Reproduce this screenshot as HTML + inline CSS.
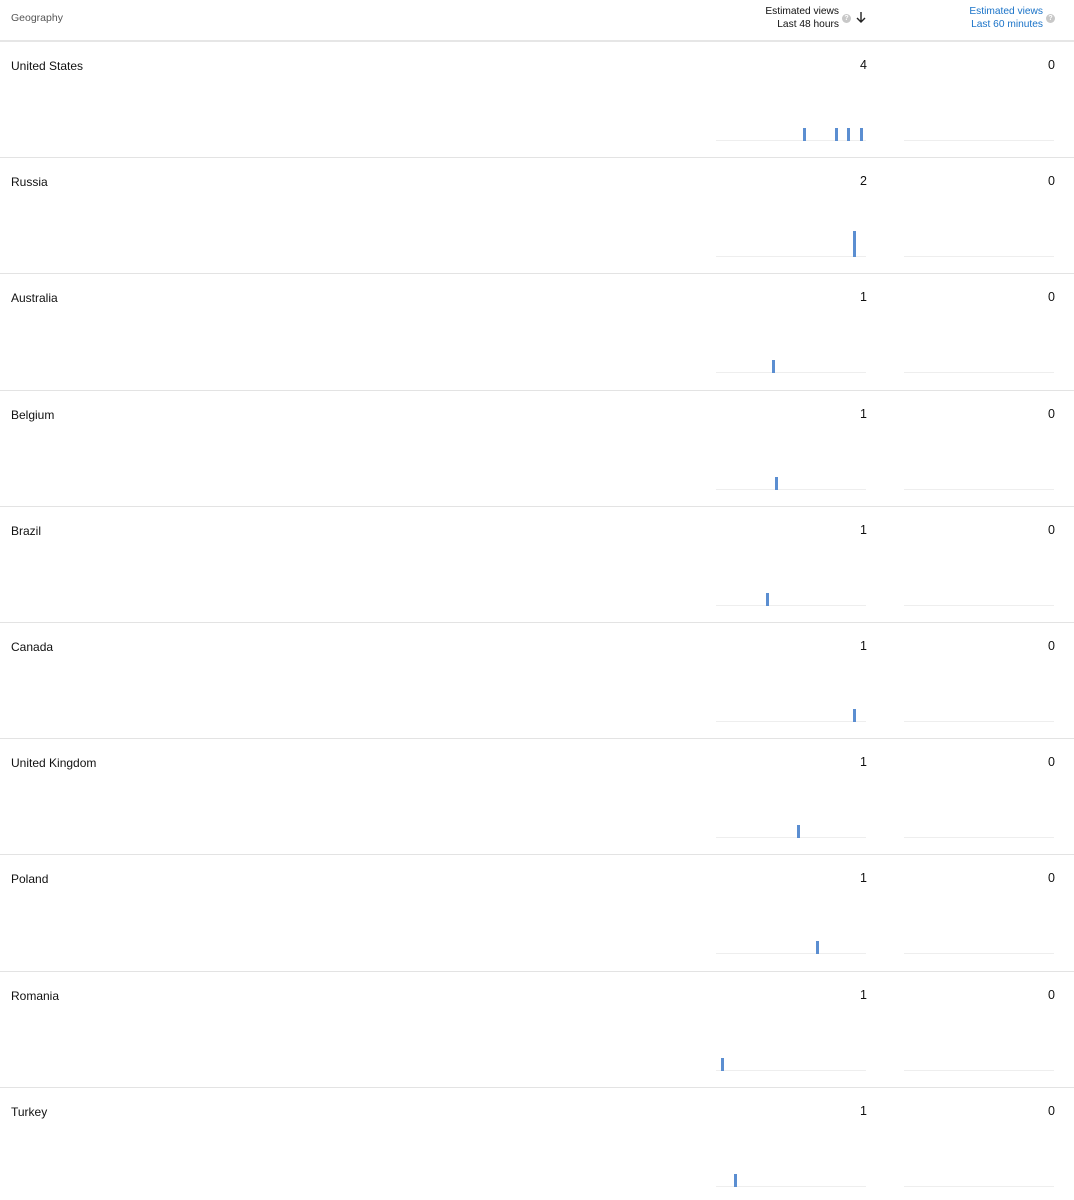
<!DOCTYPE html>
<html><head><meta charset="utf-8"><style>
html,body{margin:0;padding:0;background:#fff;}
body{width:1074px;height:1200px;position:relative;overflow:hidden;font-family:"Liberation Sans",Arial,sans-serif;color:#111;}
.a{position:absolute;}
.hl{position:absolute;left:0;width:1074px;height:1px;background:#e3e3e3;}
.name{position:absolute;left:11px;font-size:12px;}
.v{position:absolute;font-size:12.5px;text-align:right;width:40px;}
.base{position:absolute;height:1px;background:#eeeeee;}
.bar{position:absolute;width:3px;background:#5b8ed1;}
.hdr{font-size:10.2px;line-height:13px;text-align:right;position:absolute;}
.q{position:absolute;width:9px;height:9px;border-radius:50%;background:#c8c8c8;color:#fff;font-size:7px;line-height:9px;text-align:center;font-weight:bold;}
</style></head><body>
<div class="a" style="left:11px;top:12px;font-size:10.5px;color:#555;">Geography</div>
<div class="hdr" style="right:235px;top:5px;color:#111;">Estimated views<br>Last 48 hours</div>
<div class="q" style="left:842px;top:14px;">?</div>
<svg class="a" style="left:855px;top:11px" width="12" height="13" viewBox="0 0 12 13"><path d="M6 1V11M2 7L6 11L10 7" stroke="#222" stroke-width="1.4" fill="none"/></svg>
<div class="hdr" style="right:31px;top:5px;color:#1a73c8;">Estimated views<br>Last 60 minutes</div>
<div class="q" style="left:1046px;top:14px;">?</div>
<div class="hl" style="top:40px;height:2px;background:#e6e6e6"></div>

<div id="rows"></div>
<script>
var d=[["United States",4,[804,836,848,861],1],["Russia",2,[854],2],["Australia",1,[773],1],["Belgium",1,[776],1],["Brazil",1,[767],1],["Canada",1,[854],1],["United Kingdom",1,[798],1],["Poland",1,[817],1],["Romania",1,[722],1],["Turkey",1,[735],1]];
var h="";
for(var i=0;i<d.length;i++){
 var t=Math.round(41+i*116.2);
 if(i>0)h+='<div class="hl" style="top:'+t+'px"></div>';
 h+='<div class="name" style="top:'+(t+18)+'px">'+d[i][0]+'</div>';
 h+='<div class="v" style="left:827px;top:'+(t+17)+'px">'+d[i][1]+'</div>';
 h+='<div class="v" style="left:1015px;top:'+(t+17)+'px">0</div>';
 var b=t+99;
 h+='<div class="base" style="left:716px;width:150px;top:'+b+'px"></div>';
 h+='<div class="base" style="left:904px;width:150px;top:'+b+'px"></div>';
 var bh=13*d[i][3];
 for(var j=0;j<d[i][2].length;j++)h+='<div class="bar" style="left:'+(d[i][2][j]-1)+'px;top:'+(b-bh+1)+'px;height:'+bh+'px"></div>';
}
document.getElementById("rows").innerHTML=h;
</script>
</body></html>
